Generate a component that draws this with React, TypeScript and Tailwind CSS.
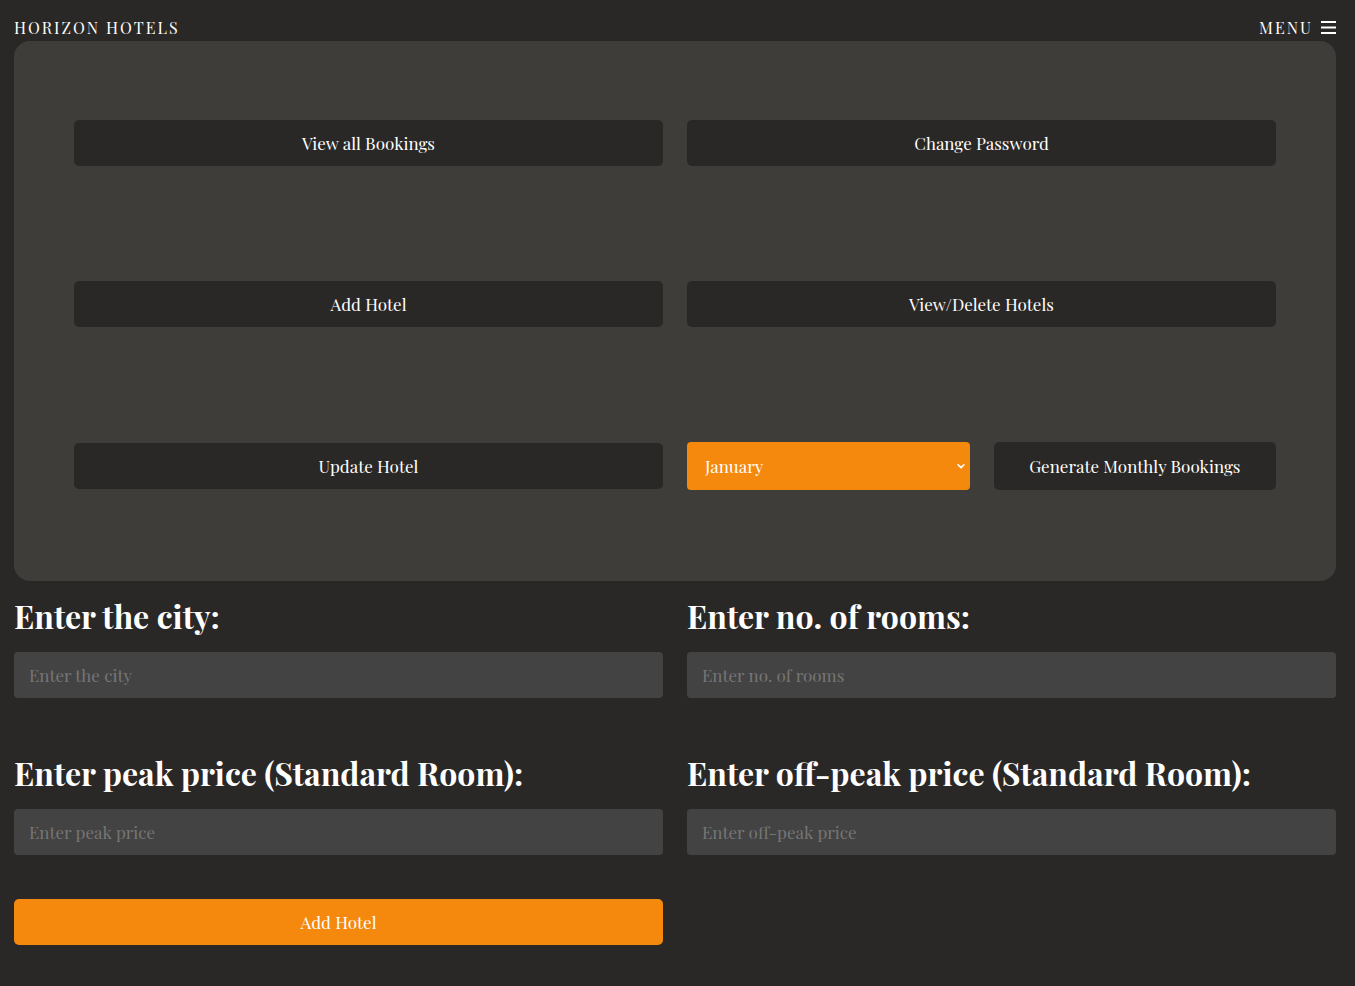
import { useState } from "react";

const serif = "font-['Playfair_Display','Liberation_Serif','DejaVu_Serif',serif]";

const PanelButton = ({ label }: { label: string }) => (
  <button
    type="button"
    className="h-[46px] w-full rounded-[5px] bg-[#2a2826] pt-[2px] text-[17px] text-white"
  >
    {label}
  </button>
);

const Field = ({ label, placeholder }: { label: string; placeholder: string }) => (
  <div className="flex flex-col">
    <label className="text-[32px] font-bold leading-[46px] text-white">{label}</label>
    <input
      type="text"
      placeholder={placeholder}
      className="mt-[13px] h-[46px] w-full rounded-[4px] bg-[#434343] px-[15px] text-[17px] text-white outline-none placeholder:text-[#767676]"
    />
  </div>
);

const months = [
  "January", "February", "March", "April", "May", "June",
  "July", "August", "September", "October", "November", "December",
];

export default function App() {
  const [month, setMonth] = useState("January");

  return (
    <div className={`min-h-[986px] bg-[#2a2826] pl-[14px] pr-[19px] pb-10 ${serif}`}>
      {/* Header */}
      <header className="flex h-[41px] items-end justify-between pb-[1px]">
        <span className="text-[16px] tracking-[2px] text-white">HORIZON HOTELS</span>
        <button type="button" className="flex items-center gap-2 text-[16px] tracking-[2px] text-white">
          MENU
          <svg width="15" height="13" viewBox="0 0 15 13" className="mb-[2px]">
            <rect x="0" y="0" width="15" height="2" fill="#fff" />
            <rect x="0" y="5.5" width="15" height="2" fill="#fff" />
            <rect x="0" y="11" width="15" height="2" fill="#fff" />
          </svg>
        </button>
      </header>

      {/* Admin panel */}
      <section className="flex h-[540px] flex-col gap-[115px] rounded-[16px] bg-[#3f3d3a] px-[60px] pt-[79px]">
        <div className="grid grid-cols-2 gap-6">
          <PanelButton label="View all Bookings" />
          <PanelButton label="Change Password" />
        </div>
        <div className="grid grid-cols-2 gap-6">
          <PanelButton label="Add Hotel" />
          <PanelButton label="View/Delete Hotels" />
        </div>
        <div className="grid grid-cols-2 items-center gap-6">
          <PanelButton label="Update Hotel" />
          <div className="grid grid-cols-2 gap-6">
            <div className="relative">
              <select
                value={month}
                onChange={(e) => setMonth(e.target.value)}
                className="h-[48px] w-full appearance-none rounded-[4px] bg-[#f5890e] pl-[18px] pt-[2px] text-[17px] text-white outline-none"
              >
                {months.map((m) => (
                  <option key={m} value={m}>
                    {m}
                  </option>
                ))}
              </select>
              <svg
                width="10" height="10" viewBox="0 0 24 24" fill="none"
                stroke="#fff" strokeWidth="4" strokeLinecap="round" strokeLinejoin="round"
                className="pointer-events-none absolute right-[4px] top-[19px]"
              >
                <path d="M5 9l7 7 7-7" />
              </svg>
            </div>
            <button
              type="button"
              className="h-[48px] w-full rounded-[5px] bg-[#2a2826] pt-[2px] text-[17px] text-white"
            >
              Generate Monthly Bookings
            </button>
          </div>
        </div>
      </section>

      {/* Add hotel form */}
      <form className="mt-[12px] grid grid-cols-2 gap-x-6 gap-y-[52px]" onSubmit={(e) => e.preventDefault()}>
        <Field label="Enter the city:" placeholder="Enter the city" />
        <Field label="Enter no. of rooms:" placeholder="Enter no. of rooms" />
        <Field label="Enter peak price (Standard Room):" placeholder="Enter peak price" />
        <Field label="Enter off-peak price (Standard Room):" placeholder="Enter off-peak price" />
        <button
          type="submit"
          className="-mt-[8px] h-[46px] w-full rounded-[5px] bg-[#f5890e] pt-[2px] text-[17px] text-white"
        >
          Add Hotel
        </button>
      </form>
    </div>
  );
}
